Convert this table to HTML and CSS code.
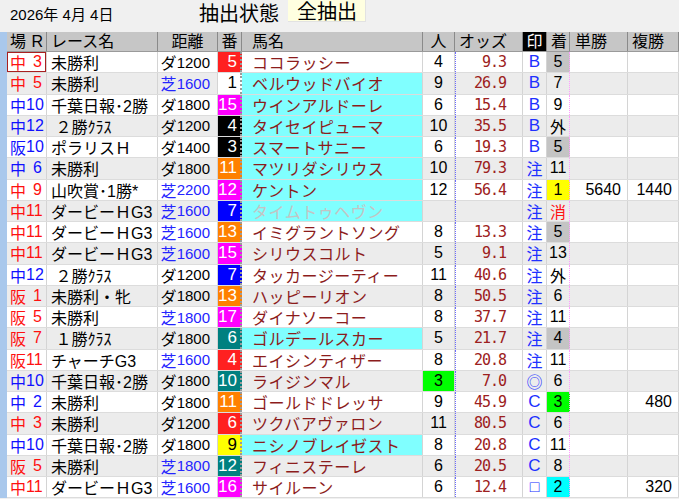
FILE: index.html
```html
<!DOCTYPE html>
<html lang="ja">
<head>
<meta charset="utf-8">
<title>抽出状態</title>
<link rel="stylesheet" href="styles.css">
</head>
<body>
<div class="topbar">
  <div class="date">2026年 4月 4日</div>
  <div class="state">抽出状態</div>
  <div class="filter">全抽出</div>
</div>
<div class="sheet">
  <div class="stripe"></div>
  <div class="table">
    <div class="row head">
      <div class="h jrh"><span>場</span><span>R</span></div>
      <div class="h">レース名</div>
      <div class="h ctr">距離</div>
      <div class="h ctr">番</div>
      <div class="h hn">馬名</div>
      <div class="h ctr">人</div>
      <div class="h">オッズ</div>
      <div class="h ctr inv">印</div>
      <div class="h">着</div>
      <div class="h pl">単勝</div>
      <div class="h">複勝</div>
    </div>

    <div class="row">
      <div class="c jr red sel"><span>中</span><span>3</span></div>
      <div class="c race">未勝利</div>
      <div class="c dist"><span class="s">ダ</span>1200</div>
      <div class="c num fr">5</div>
      <div class="c horse">ココラッシー</div>
      <div class="c pop">4</div>
      <div class="c odds">9.3</div>
      <div class="c mark lt">B</div>
      <div class="c fin gray">5</div>
      <div class="c pay"></div>
      <div class="c pay"></div>
    </div>
    <div class="row alt">
      <div class="c jr red"><span>中</span><span>5</span></div>
      <div class="c race">未勝利</div>
      <div class="c dist turf"><span class="s">芝</span>1600</div>
      <div class="c num fw">1</div>
      <div class="c horse cy">ベルウッドバイオ</div>
      <div class="c pop">9</div>
      <div class="c odds">26.9</div>
      <div class="c mark lt">B</div>
      <div class="c fin">7</div>
      <div class="c pay"></div>
      <div class="c pay"></div>
    </div>
    <div class="row">
      <div class="c jr blue"><span>中</span><span>10</span></div>
      <div class="c race">千葉日報･2勝</div>
      <div class="c dist"><span class="s">ダ</span>1800</div>
      <div class="c num fm">15</div>
      <div class="c horse cy">ウインアルドーレ</div>
      <div class="c pop">6</div>
      <div class="c odds">15.4</div>
      <div class="c mark lt">B</div>
      <div class="c fin">9</div>
      <div class="c pay"></div>
      <div class="c pay"></div>
    </div>
    <div class="row alt">
      <div class="c jr blue"><span>中</span><span>12</span></div>
      <div class="c race">&nbsp;２勝ｸﾗｽ</div>
      <div class="c dist"><span class="s">ダ</span>1200</div>
      <div class="c num fk">4</div>
      <div class="c horse cy">タイセイピューマ</div>
      <div class="c pop">10</div>
      <div class="c odds">35.5</div>
      <div class="c mark lt">B</div>
      <div class="c fin cj">外</div>
      <div class="c pay"></div>
      <div class="c pay"></div>
    </div>
    <div class="row">
      <div class="c jr blue"><span>阪</span><span>10</span></div>
      <div class="c race">ポラリスＨ</div>
      <div class="c dist"><span class="s">ダ</span>1400</div>
      <div class="c num fk">3</div>
      <div class="c horse cy">スマートサニー</div>
      <div class="c pop">6</div>
      <div class="c odds">19.3</div>
      <div class="c mark lt">B</div>
      <div class="c fin gray">5</div>
      <div class="c pay"></div>
      <div class="c pay"></div>
    </div>
    <div class="row alt">
      <div class="c jr blue"><span>中</span><span>6</span></div>
      <div class="c race">未勝利</div>
      <div class="c dist"><span class="s">ダ</span>1800</div>
      <div class="c num fo">11</div>
      <div class="c horse cy">マツリダシリウス</div>
      <div class="c pop">10</div>
      <div class="c odds">79.3</div>
      <div class="c mark">注</div>
      <div class="c fin">11</div>
      <div class="c pay"></div>
      <div class="c pay"></div>
    </div>
    <div class="row">
      <div class="c jr red"><span>中</span><span>9</span></div>
      <div class="c race">山吹賞･1勝*</div>
      <div class="c dist turf"><span class="s">芝</span>2200</div>
      <div class="c num fm">12</div>
      <div class="c horse cy">ケントン</div>
      <div class="c pop">12</div>
      <div class="c odds">56.4</div>
      <div class="c mark">注</div>
      <div class="c fin yel">1</div>
      <div class="c pay">5640</div>
      <div class="c pay">1440</div>
    </div>
    <div class="row alt">
      <div class="c jr red"><span>中</span><span>11</span></div>
      <div class="c race">ダービーＨG3</div>
      <div class="c dist turf"><span class="s">芝</span>1600</div>
      <div class="c num fb">7</div>
      <div class="c horse cy scr">タイムトゥヘヴン</div>
      <div class="c pop"></div>
      <div class="c odds"></div>
      <div class="c mark">注</div>
      <div class="c fin cj redt">消</div>
      <div class="c pay"></div>
      <div class="c pay"></div>
    </div>
    <div class="row">
      <div class="c jr red"><span>中</span><span>11</span></div>
      <div class="c race">ダービーＨG3</div>
      <div class="c dist turf"><span class="s">芝</span>1600</div>
      <div class="c num fo">13</div>
      <div class="c horse">イミグラントソング</div>
      <div class="c pop">8</div>
      <div class="c odds">13.3</div>
      <div class="c mark">注</div>
      <div class="c fin gray">5</div>
      <div class="c pay"></div>
      <div class="c pay"></div>
    </div>
    <div class="row alt">
      <div class="c jr red"><span>中</span><span>11</span></div>
      <div class="c race">ダービーＨG3</div>
      <div class="c dist turf"><span class="s">芝</span>1600</div>
      <div class="c num fm">15</div>
      <div class="c horse">シリウスコルト</div>
      <div class="c pop">5</div>
      <div class="c odds">9.1</div>
      <div class="c mark">注</div>
      <div class="c fin">13</div>
      <div class="c pay"></div>
      <div class="c pay"></div>
    </div>
    <div class="row">
      <div class="c jr blue"><span>中</span><span>12</span></div>
      <div class="c race">&nbsp;２勝ｸﾗｽ</div>
      <div class="c dist"><span class="s">ダ</span>1200</div>
      <div class="c num fb">7</div>
      <div class="c horse">タッカージーティー</div>
      <div class="c pop">11</div>
      <div class="c odds">40.6</div>
      <div class="c mark">注</div>
      <div class="c fin cj">外</div>
      <div class="c pay"></div>
      <div class="c pay"></div>
    </div>
    <div class="row alt">
      <div class="c jr red"><span>阪</span><span>1</span></div>
      <div class="c race">未勝利・牝</div>
      <div class="c dist"><span class="s">ダ</span>1800</div>
      <div class="c num fo">13</div>
      <div class="c horse">ハッピーリオン</div>
      <div class="c pop">8</div>
      <div class="c odds">50.5</div>
      <div class="c mark">注</div>
      <div class="c fin">6</div>
      <div class="c pay"></div>
      <div class="c pay"></div>
    </div>
    <div class="row">
      <div class="c jr red"><span>阪</span><span>5</span></div>
      <div class="c race">未勝利</div>
      <div class="c dist turf"><span class="s">芝</span>1800</div>
      <div class="c num fm">17</div>
      <div class="c horse">ダイナソーコー</div>
      <div class="c pop">8</div>
      <div class="c odds">37.7</div>
      <div class="c mark">注</div>
      <div class="c fin">11</div>
      <div class="c pay"></div>
      <div class="c pay"></div>
    </div>
    <div class="row alt">
      <div class="c jr red"><span>阪</span><span>7</span></div>
      <div class="c race">&nbsp;１勝ｸﾗｽ</div>
      <div class="c dist"><span class="s">ダ</span>1800</div>
      <div class="c num ft">6</div>
      <div class="c horse cy">ゴルデールスカー</div>
      <div class="c pop">5</div>
      <div class="c odds">21.7</div>
      <div class="c mark">注</div>
      <div class="c fin gray">4</div>
      <div class="c pay"></div>
      <div class="c pay"></div>
    </div>
    <div class="row">
      <div class="c jr red"><span>阪</span><span>11</span></div>
      <div class="c race">チャーチG3</div>
      <div class="c dist turf"><span class="s">芝</span>1600</div>
      <div class="c num fr">4</div>
      <div class="c horse">エイシンティザー</div>
      <div class="c pop">8</div>
      <div class="c odds">20.8</div>
      <div class="c mark">注</div>
      <div class="c fin">11</div>
      <div class="c pay"></div>
      <div class="c pay"></div>
    </div>
    <div class="row alt">
      <div class="c jr blue"><span>中</span><span>10</span></div>
      <div class="c race">千葉日報･2勝</div>
      <div class="c dist"><span class="s">ダ</span>1800</div>
      <div class="c num ft">10</div>
      <div class="c horse">ライジンマル</div>
      <div class="c pop grn">3</div>
      <div class="c odds">7.0</div>
      <div class="c mark">◎</div>
      <div class="c fin">6</div>
      <div class="c pay"></div>
      <div class="c pay"></div>
    </div>
    <div class="row">
      <div class="c jr blue"><span>中</span><span>2</span></div>
      <div class="c race">未勝利</div>
      <div class="c dist"><span class="s">ダ</span>1800</div>
      <div class="c num fo">11</div>
      <div class="c horse">ゴールドドレッサ</div>
      <div class="c pop">9</div>
      <div class="c odds">45.9</div>
      <div class="c mark lt">C</div>
      <div class="c fin grn">3</div>
      <div class="c pay"></div>
      <div class="c pay">480</div>
    </div>
    <div class="row alt">
      <div class="c jr red"><span>中</span><span>3</span></div>
      <div class="c race">未勝利</div>
      <div class="c dist"><span class="s">ダ</span>1200</div>
      <div class="c num fr">6</div>
      <div class="c horse">ツクバアヴァロン</div>
      <div class="c pop">11</div>
      <div class="c odds">80.5</div>
      <div class="c mark lt">C</div>
      <div class="c fin">6</div>
      <div class="c pay"></div>
      <div class="c pay"></div>
    </div>
    <div class="row">
      <div class="c jr blue"><span>中</span><span>10</span></div>
      <div class="c race">千葉日報･2勝</div>
      <div class="c dist"><span class="s">ダ</span>1800</div>
      <div class="c num fy">9</div>
      <div class="c horse cy">ニシノブレイゼスト</div>
      <div class="c pop">8</div>
      <div class="c odds">20.8</div>
      <div class="c mark lt">C</div>
      <div class="c fin">11</div>
      <div class="c pay"></div>
      <div class="c pay"></div>
    </div>
    <div class="row alt">
      <div class="c jr red"><span>阪</span><span>5</span></div>
      <div class="c race">未勝利</div>
      <div class="c dist turf"><span class="s">芝</span>1800</div>
      <div class="c num ft">12</div>
      <div class="c horse">フィニステーレ</div>
      <div class="c pop">6</div>
      <div class="c odds">20.5</div>
      <div class="c mark lt">C</div>
      <div class="c fin">8</div>
      <div class="c pay"></div>
      <div class="c pay"></div>
    </div>
    <div class="row">
      <div class="c jr red"><span>中</span><span>11</span></div>
      <div class="c race">ダービーＨG3</div>
      <div class="c dist turf"><span class="s">芝</span>1600</div>
      <div class="c num fm">16</div>
      <div class="c horse">サイルーン</div>
      <div class="c pop">6</div>
      <div class="c odds">12.4</div>
      <div class="c mark">□</div>
      <div class="c fin cyb">2</div>
      <div class="c pay"></div>
      <div class="c pay">320</div>
    </div>
  </div>
</div>
</body>
</html>
```

FILE: styles.css
```css
html, body {
  margin: 0;
  padding: 0;
}
body {
  width: 679px;
  height: 499px;
  overflow: hidden;
  background: #f0f0f0;
  font-family: "Liberation Sans", "Noto Sans CJK JP", sans-serif;
  color: #000;
}

/* top bar */
.topbar {
  height: 32px;
  display: grid;
  grid-template-columns: 189px 89px auto;
  padding-left: 10px;
  box-sizing: border-box;
  align-items: start;
}
.date {
  font-size: 15px;
  line-height: 15px;
  padding-top: 7px;
}
.state {
  font-size: 20px;
  line-height: 20px;
  padding-top: 4px;
}
.filter {
  width: 78px;
  height: 22px;
  box-sizing: border-box;
  background: #ffffe0;
  font-size: 20px;
  line-height: 20px;
  padding: 2px 0 0 9px;
  border-right: 1px solid #e2e2e2;
  border-bottom: 1px solid #e2e2e2;
}

/* sheet */
.sheet {
  display: flex;
}
.stripe {
  width: 7px;
  background: #a9c8ec;
  flex: none;
}
.table {
  width: 672px;
  background: #fff;
}
.row {
  display: grid;
  grid-template-columns: 40px 111px 60px 24px 181px 32px 68px 24px 23px 58px 51px;
  height: 21.25px;
  box-sizing: border-box;
  border-bottom: 1px solid #dcdcdc;
  background: #fff;
}
.row.alt {
  background: #ececec;
}
.row.head {
  height: 20px;
  background: #c6c6c6;
  border-bottom: 1px solid #9a9a9a;
}

/* header cells */
.h {
  font-size: 16px;
  line-height: 19px;
  padding-left: 4px;
  border-right: 1px solid #8a8a8a;
  white-space: nowrap;
  overflow: hidden;
}
.h.ctr {
  padding-left: 0;
  text-align: center;
}
.h.hn {
  padding-left: 10px;
}
.h.pl {
  padding-left: 5px;
}
.h.inv {
  background: #000;
  color: #fff;
}
.jrh {
  display: flex;
  justify-content: space-between;
  padding: 0 3px 0 3px;
}

/* data cells */
.c {
  display: flex;
  align-items: center;
  box-sizing: border-box;
  border-right: 1px solid #d4d4d4;
  white-space: nowrap;
  overflow: hidden;
  font-size: 16px;
}
.jr {
  justify-content: space-between;
  padding: 0 4px 0 3px;
}
.jr.red { color: #ff1010; }
.jr.blue { color: #1010ff; }
.jr.sel {
  box-shadow: inset 0 0 0 1px #a82020;
}
.race {
  padding-left: 4px;
}
.dist {
  justify-content: flex-end;
  padding-right: 7px;
  font-size: 15px;
}
.dist .s {
  font-size: 16px;
}
.dist.turf {
  color: #2424ff;
}
.num {
  justify-content: flex-end;
  padding-right: 3px;
  color: #fff;
  font-size: 17px;
  border-right: 2px dotted #9a9a9a;
}
.fr { background: #ff2020; }
.fw { background: #fff; color: #000; }
.fm { background: #ff00ff; }
.fk { background: #000; }
.fo { background: #ff8000; }
.fb { background: #0000ff; }
.ft { background: #008080; }
.fy { background: #ffff00; color: #000; }

.horse {
  padding-left: 10px;
  color: #8c1c1c;
  letter-spacing: 0.5px;
}
.horse.cy {
  background: #80ffff;
}
.horse.scr {
  color: #c4c4c4;
}
.pop {
  justify-content: center;
  font-size: 16px;
}
.pop.grn {
  background: #00ff00;
}
.odds {
  justify-content: flex-end;
  padding-right: 16px;
  font-family: "DejaVu Sans Mono", monospace;
  font-size: 15px;
  letter-spacing: -1px;
  color: #9c2020;
  border-left: 1px dotted #6a6aff;
}
.mark {
  justify-content: center;
  color: #2030ff;
}
.mark.lt {
  font-size: 17px;
}
.fin {
  justify-content: center;
  font-size: 16px;
  border-right: 1px dotted #ff9cff;
}
.fin.redt {
  color: #ff1010;
}
.fin.gray { background: #c4c4c4; }
.fin.yel { background: #ffff00; }
.fin.grn { background: #00ff00; }
.fin.cyb { background: #00ffff; }
.pay {
  justify-content: flex-end;
  padding-right: 6px;
  font-size: 16px;
}
```
